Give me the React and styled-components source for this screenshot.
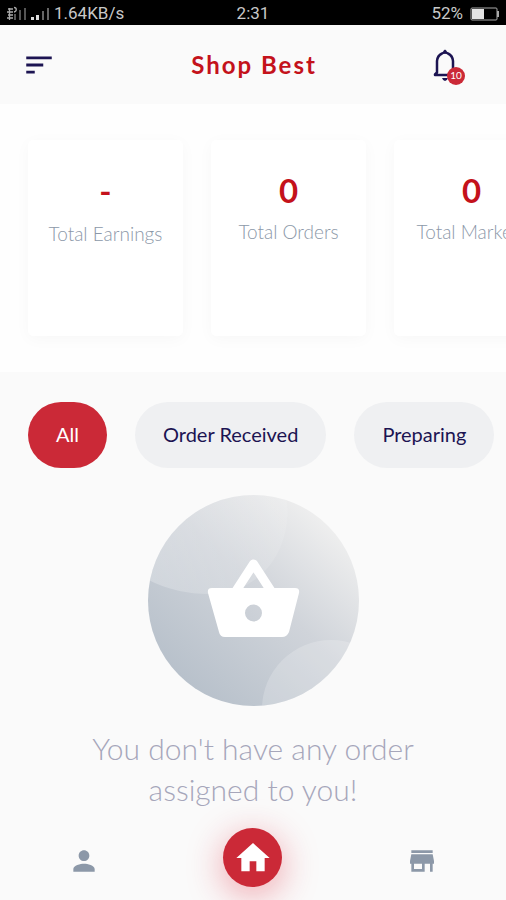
import React, { useState } from "react";
import styled, { createGlobalStyle } from "styled-components";
import { MdHome, MdPerson, MdSort, MdStore } from "react-icons/md";

const GlobalStyle = createGlobalStyle`
  :root {
    --red: #cb2937;
    --darkRed: #c4121b;
    --navy: #1c1452;
    --grey: #8c98a8;
    --background: #fafafa;
  }
  * {
    box-sizing: border-box;
  }
  body {
    margin: 0;
    background: var(--background);
    font-family: Lato, "Liberation Sans", sans-serif;
  }
  button {
    border: 0;
    padding: 0;
    background: none;
    font-family: inherit;
    cursor: pointer;
  }
  svg {
    display: block;
    flex-shrink: 0;
  }
`;

const PageStyles = styled.div`
  min-height: 100vh;
  display: flex;
  flex-direction: column;
  overflow: hidden;
`;

const StatusBarStyles = styled.div`
  height: 25px;
  padding: 2px 6px 0;
  display: grid;
  grid-template-columns: 1fr auto 1fr;
  align-items: center;
  background: #000;
  color: #c8c8c8;
  font-family: Roboto, sans-serif;
  font-size: 17px;
  line-height: 23px;
`;

const StatusGroupStyles = styled.div`
  display: flex;
  align-items: center;
  justify-content: ${props => (props.$end ? "flex-end" : "flex-start")};
  gap: ${props => (props.$end ? 7 : 4)}px;
`;

const HeaderStyles = styled.header`
  height: 79px;
  padding: 0 42px 0 22px;
  display: grid;
  grid-template-columns: 1fr auto 1fr;
  align-items: center;
  color: var(--navy);
  h1 {
    margin: 0;
    padding-left: 22px;
    color: var(--darkRed);
    font-size: 24px;
    font-weight: 700;
    letter-spacing: 2px;
  }
`;

const IconButtonStyles = styled.button`
  position: relative;
  justify-self: ${props => (props.$end ? "end" : "start")};
  color: inherit;
`;

const BadgeStyles = styled.span`
  position: absolute;
  right: -1px;
  bottom: -1px;
  width: 18px;
  height: 18px;
  border-radius: 50%;
  background: var(--red);
  color: #fff;
  font-size: 10px;
  line-height: 16px;
  text-align: center;
`;

const StatsStyles = styled.section`
  padding: 36px 28px;
  display: flex;
  gap: 28px;
  overflow: hidden;
  background: #fefefe;
`;

const StatCardStyles = styled.article`
  flex: 0 0 155px;
  height: 196px;
  padding-top: 30px;
  display: flex;
  flex-direction: column;
  align-items: center;
  gap: ${props => (props.$loading ? 2 : 0)}px;
  border-radius: 5px;
  background: #fff;
  box-shadow: 0 3px 16px rgba(0, 0, 0, 0.03);
  white-space: nowrap;
  strong {
    color: var(--darkRed);
    font-size: 33px;
    font-weight: 700;
    line-height: 41px;
  }
  span {
    color: var(--grey);
    font-size: 19px;
    font-weight: 300;
    line-height: 41px;
  }
`;

const FiltersStyles = styled.div`
  padding: 30px 28px 27px;
  display: flex;
  gap: 28px;
  overflow: hidden;
`;

const FilterStyles = styled.button`
  && {
    flex-shrink: 0;
    height: 66px;
    padding: 0 28px 2px;
    border-radius: 33px;
    background: ${props => (props.$active ? "var(--red)" : "#eff0f2")};
    color: ${props => (props.$active ? "#fff" : "var(--navy)")};
    font-size: 20px;
  }
`;

const EmptyStyles = styled.main`
  flex: 1;
  display: flex;
  flex-direction: column;
  align-items: center;
  p {
    max-width: 350px;
    margin: 22px 0 0;
    color: #a6a6ba;
    font-size: 30px;
    font-weight: 300;
    line-height: 41px;
    text-align: center;
  }
`;

const NavStyles = styled.nav`
  padding-bottom: 13px;
  display: grid;
  grid-template-columns: repeat(3, 1fr);
  align-items: end;
  justify-items: center;
`;

const NavButtonStyles = styled.button`
  height: 52px;
  color: var(--grey);
`;

const HomeButtonStyles = styled.button`
  && {
    width: 59px;
    height: 59px;
    display: grid;
    place-items: center;
    border-radius: 50%;
    background: var(--red);
    color: #fff;
    box-shadow: 0 8px 36px rgba(225, 30, 50, 0.4);
  }
`;

const stats = [
  { label: "Total Earnings", value: "-", loading: true },
  { label: "Total Orders", value: "0" },
  { label: "Total Markets", value: "0" },
];

const filters = ["All", "Order Received", "Preparing"];

function SignalIcon() {
  return (
    <svg width="44" height="16" viewBox="0 0 44 16" aria-hidden="true">
      <g fill="none" stroke="#aaa" strokeWidth="1.3">
        <path d="M2 3h5M1 6h6M2 9h5M1 12h6M3.5 2v12" />
        <path d="M8 1.5c3 0 3 4 0 4.5" />
      </g>
      <path d="M8 8h2v6H8zM13 4h2v10h-2zM18 2h2v12h-2z" fill="#555" />
      <path d="M25 11h3v3h-3zM30 9h3v5h-3z" fill="#ddd" />
      <path d="M36 5h2v9h-2zM41 2h2v12h-2z" fill="#666" />
    </svg>
  );
}

function BatteryIcon() {
  return (
    <svg width="30" height="14" viewBox="0 0 30 14" aria-hidden="true">
      <rect x="1" y="1" width="26" height="12" rx="1" fill="none" stroke="#aaa" />
      <path d="M2 2h12v10H2z" fill="#e4e4e4" />
      <path d="M27 4h2v6h-2z" fill="#aaa" />
    </svg>
  );
}

function BellIcon() {
  return (
    <svg width="38" height="38" viewBox="0 0 38 38" aria-hidden="true">
      <path
        d="M9 29V28.500L11 26.500V15Q11.500 9.500 16 7.500L19 6L22 7.500Q26.500 9.500 27 15V26.500L29 28.500V29Z"
        fill="none"
        stroke="currentColor"
        strokeWidth="2.500"
        strokeLinejoin="round"
      />
      <path d="M17 7Q17 4 19 3.500Q21 4 21 7L19 8Z" fill="currentColor" />
      <path d="M16 32H22Q21 35 19 35Q17 35 16 32Z" fill="currentColor" />
    </svg>
  );
}

function BasketArt() {
  return (
    <svg width="211" height="211" viewBox="0 0 211 211" aria-hidden="true">
      <defs>
        <linearGradient id="disc" x1="0.2" y1="0.9" x2="0.88" y2="0.15">
          <stop offset="0" stopColor="#b8c1cb" />
          <stop offset="0.55" stopColor="#d0d4da" />
          <stop offset="1" stopColor="#efefef" />
        </linearGradient>
        <linearGradient id="shine" x1="0" y1="0" x2="1" y2="0">
          <stop offset="0" stopColor="#fff" stopOpacity="0.26" />
          <stop offset="1" stopColor="#fff" stopOpacity="0.1" />
        </linearGradient>
        <clipPath id="discClip">
          <circle cx="105.5" cy="105.5" r="105.5" />
        </clipPath>
      </defs>
      <g clipPath="url(#discClip)">
        <path d="M0 0h211v211H0z" fill="url(#disc)" />
        <path d="M-10 79Q22 99 62 99C112 99 147 54 138 0H-10Z" fill="url(#shine)" />
        <circle cx="183" cy="214" r="69" fill="#fff" fillOpacity="0.2" />
      </g>
      <path
        d="M88 96L105.5 69L123 96"
        fill="none"
        stroke="#fff"
        strokeWidth="9"
        strokeLinecap="round"
        strokeLinejoin="round"
      />
      <path
        fill="#fff"
        fillRule="evenodd"
        d="M64 93H147Q152 93 151 98L141 137Q139 142 134 142H77Q72 142 71 137L60 98Q59 93 64 93ZM105.5 109.5a8.5 8.5 0 1 0 0 17a8.5 8.5 0 1 0 0-17Z"
      />
    </svg>
  );
}

export default function App() {
  const [active, setActive] = useState("All");
  return (
    <PageStyles>
      <GlobalStyle />
      <StatusBarStyles>
        <StatusGroupStyles>
          <SignalIcon />
          <span>1.64KB/s</span>
        </StatusGroupStyles>
        <span>2:31</span>
        <StatusGroupStyles $end>
          <span>52%</span>
          <BatteryIcon />
        </StatusGroupStyles>
      </StatusBarStyles>
      <HeaderStyles>
        <IconButtonStyles aria-label="Menu">
          <MdSort size={34} />
        </IconButtonStyles>
        <h1>Shop Best</h1>
        <IconButtonStyles $end aria-label="Notifications">
          <BellIcon />
          <BadgeStyles>10</BadgeStyles>
        </IconButtonStyles>
      </HeaderStyles>
      <StatsStyles>
        {stats.map(stat => (
          <StatCardStyles key={stat.label} $loading={stat.loading}>
            <strong>{stat.value}</strong>
            <span>{stat.label}</span>
          </StatCardStyles>
        ))}
      </StatsStyles>
      <FiltersStyles>
        {filters.map(filter => (
          <FilterStyles
            key={filter}
            $active={filter === active}
            aria-pressed={filter === active}
            onClick={() => setActive(filter)}
          >
            {filter}
          </FilterStyles>
        ))}
      </FiltersStyles>
      <EmptyStyles>
        <BasketArt />
        <p>You don't have any order assigned to you!</p>
      </EmptyStyles>
      <NavStyles>
        <NavButtonStyles aria-label="Profile">
          <MdPerson size={32} />
        </NavButtonStyles>
        <HomeButtonStyles aria-label="Home">
          <MdHome size={40} />
        </HomeButtonStyles>
        <NavButtonStyles aria-label="Markets">
          <MdStore size={32} />
        </NavButtonStyles>
      </NavStyles>
    </PageStyles>
  );
}
